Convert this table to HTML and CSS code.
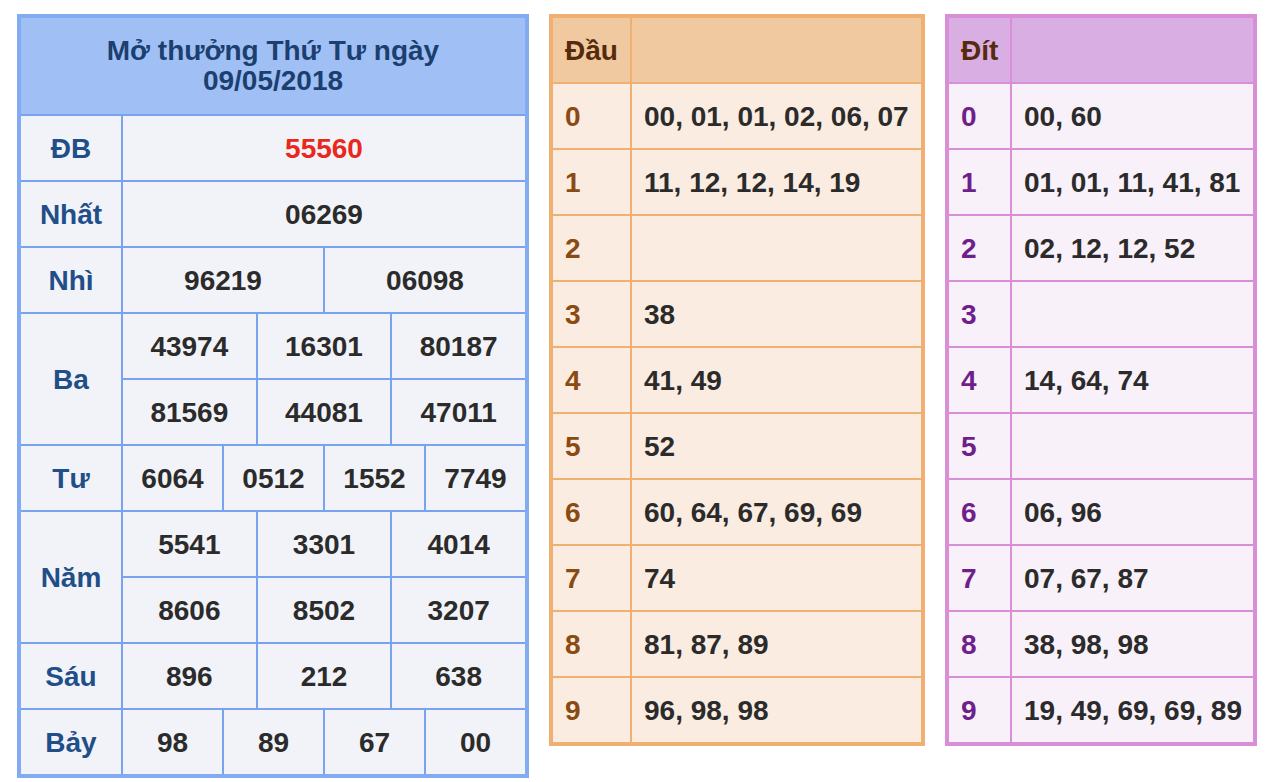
FILE: index.html
```html
<!DOCTYPE html>
<html lang="vi">
<head>
<meta charset="utf-8">
<title>Kết quả xổ số</title>
<link rel="stylesheet" href="styles.css">
</head>
<body>
<div class="page">
  <div class="board results">
    <div class="title">Mở thưởng Thứ Tư ngày<br>09/05/2018</div>

    <div class="lbl">ĐB</div>
    <div class="val s12 special">55560</div>

    <div class="lbl">Nhất</div>
    <div class="val s12">06269</div>

    <div class="lbl">Nhì</div>
    <div class="val s6">96219</div>
    <div class="val s6">06098</div>

    <div class="lbl r2">Ba</div>
    <div class="val s4">43974</div>
    <div class="val s4">16301</div>
    <div class="val s4">80187</div>
    <div class="val s4">81569</div>
    <div class="val s4">44081</div>
    <div class="val s4">47011</div>

    <div class="lbl">Tư</div>
    <div class="val s3">6064</div>
    <div class="val s3">0512</div>
    <div class="val s3">1552</div>
    <div class="val s3">7749</div>

    <div class="lbl r2">Năm</div>
    <div class="val s4">5541</div>
    <div class="val s4">3301</div>
    <div class="val s4">4014</div>
    <div class="val s4">8606</div>
    <div class="val s4">8502</div>
    <div class="val s4">3207</div>

    <div class="lbl">Sáu</div>
    <div class="val s4">896</div>
    <div class="val s4">212</div>
    <div class="val s4">638</div>

    <div class="lbl">Bảy</div>
    <div class="val s3">98</div>
    <div class="val s3">89</div>
    <div class="val s3">67</div>
    <div class="val s3">00</div>
  </div>

  <div class="board loto head-table">
    <div class="hd">Đầu</div><div class="hd"></div>
    <div class="k">0</div><div class="v">00, 01, 01, 02, 06, 07</div>
    <div class="k">1</div><div class="v">11, 12, 12, 14, 19</div>
    <div class="k">2</div><div class="v"></div>
    <div class="k">3</div><div class="v">38</div>
    <div class="k">4</div><div class="v">41, 49</div>
    <div class="k">5</div><div class="v">52</div>
    <div class="k">6</div><div class="v">60, 64, 67, 69, 69</div>
    <div class="k">7</div><div class="v">74</div>
    <div class="k">8</div><div class="v">81, 87, 89</div>
    <div class="k">9</div><div class="v">96, 98, 98</div>
  </div>

  <div class="board loto tail-table">
    <div class="hd">Đít</div><div class="hd"></div>
    <div class="k">0</div><div class="v">00, 60</div>
    <div class="k">1</div><div class="v">01, 01, 11, 41, 81</div>
    <div class="k">2</div><div class="v">02, 12, 12, 52</div>
    <div class="k">3</div><div class="v"></div>
    <div class="k">4</div><div class="v">14, 64, 74</div>
    <div class="k">5</div><div class="v"></div>
    <div class="k">6</div><div class="v">06, 96</div>
    <div class="k">7</div><div class="v">07, 67, 87</div>
    <div class="k">8</div><div class="v">38, 98, 98</div>
    <div class="k">9</div><div class="v">19, 49, 69, 69, 89</div>
  </div>
</div>
</body>
</html>
```

FILE: styles.css
```css
html, body {
  margin: 0;
  padding: 0;
  background: #ffffff;
}

.page {
  display: flex;
  align-items: flex-start;
  gap: 20px;
  padding: 14px 0 0 17px;
  font-family: "Liberation Sans", Arial, sans-serif;
  font-weight: bold;
  font-size: 28px;
  color: #2b2b2b;
}

.board {
  display: grid;
  gap: 2px;
  border-style: solid;
  border-width: 4px;
}

.board > div {
  display: flex;
  align-items: center;
  padding-top: 2px;
}

/* Results board */
.results {
  width: 504px;
  grid-template-columns: 100px repeat(12, 1fr);
  grid-template-rows: 96px repeat(10, 64px);
  background: #78a3ef;
  border-color: #82abf2;
}

.results > div {
  background: #f2f3f8;
  justify-content: center;
  text-align: center;
}

.results .title {
  grid-column: 1 / -1;
  background: #a0bff5;
  color: #1b3f6e;
  line-height: 30px;
  padding-top: 0;
}

.results .lbl {
  grid-column: 1;
  color: #1f4e89;
}

.results .r2 { grid-row: span 2; }
.results .s12 { grid-column: span 12; }
.results .s6 { grid-column: span 6; }
.results .s4 { grid-column: span 4; }
.results .s3 { grid-column: span 3; }
.results .special { color: #e8281c; }

/* Loto boards */
.loto {
  grid-template-rows: repeat(11, 64px);
}

.loto > div {
  padding-left: 12px;
}

.loto .hd {
  color: #562a0c;
}

.head-table {
  width: 368px;
  grid-template-columns: 77px 1fr;
  background: #efb072;
  border-color: #efb072;
}

.head-table > div { background: #faece1; }
.head-table .hd { background: #f0c9a0; }
.head-table .k { color: #8a4a12; }

.tail-table {
  width: 304px;
  grid-template-columns: 61px 1fr;
  background: #d98ed8;
  border-color: #d98ed8;
}

.tail-table > div { background: #f9f1f9; }
.tail-table .hd { background: #d9aee2; }
.tail-table .k { color: #6f1f8c; }
```
